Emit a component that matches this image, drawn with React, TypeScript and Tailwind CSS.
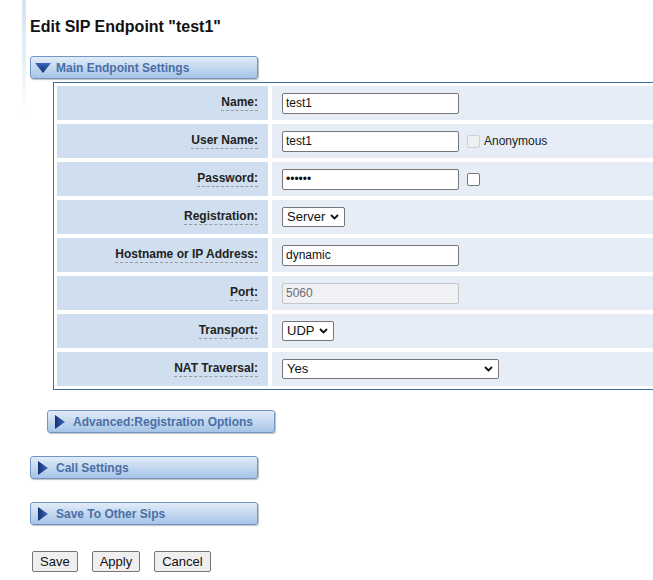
import React from "react";

const font = "font-['Liberation_Sans',Arial,sans-serif]";

function DownArrow() {
  return (
    <svg width="16" height="10" viewBox="0 0 16 10" className="shrink-0">
      <defs>
        <linearGradient id="dg" x1="0" y1="0" x2="0" y2="1">
          <stop offset="0" stopColor="#3a64c0" />
          <stop offset="1" stopColor="#14306f" />
        </linearGradient>
      </defs>
      <polygon points="0,0 16,0 8,10" fill="url(#dg)" />
    </svg>
  );
}

function RightArrow() {
  return (
    <svg width="10" height="14" viewBox="0 0 10 14" className="shrink-0">
      <defs>
        <linearGradient id="rg" x1="0" y1="0" x2="1" y2="0">
          <stop offset="0" stopColor="#14306f" />
          <stop offset="1" stopColor="#3f6ac4" />
        </linearGradient>
      </defs>
      <polygon points="0,0 10,7 0,14" fill="url(#rg)" />
    </svg>
  );
}

function SectionBar({
  title,
  open,
  className = "",
}: {
  title: string;
  open?: boolean;
  className?: string;
}) {
  return (
    <div
      className={`flex h-[23px] w-[228px] items-center rounded-[3px] border border-[#7196c4] bg-gradient-to-b from-[#e2ecf8] to-[#a6c4e8] shadow-[1px_1px_1px_rgba(0,0,0,0.25)] ${
        open ? "pl-[4px]" : "pl-[7px]"
      } ${className}`}
    >
      {open ? <DownArrow /> : <RightArrow />}
      <span
        className={`text-[12px] font-bold text-[#4a6fa5] ${
          open ? "ml-[5px]" : "ml-[8px]"
        }`}
      >
        {title}
      </span>
    </div>
  );
}

function Chevron() {
  return (
    <svg width="9" height="6" viewBox="0 0 9 6" className="shrink-0">
      <polyline
        points="1,1 4.5,4.5 8,1"
        fill="none"
        stroke="#111"
        strokeWidth="1.8"
      />
    </svg>
  );
}

function TextBox({ value, disabled, password }: { value: string; disabled?: boolean; password?: boolean }) {
  return (
    <input
      readOnly
      type={password ? "password" : "text"}
      value={value}
      className={`h-[21px] w-[177px] rounded-[2px] border px-[3px] text-[12px] outline-none ${font} ${
        disabled
          ? "border-[#c4c4c4] bg-[#f0f1f4] text-[#6d6d6d]"
          : "border-[#767676] bg-white text-[#111]"
      }`}
    />
  );
}

function Select({ value, width }: { value: string; width: string }) {
  return (
    <div
      className={`flex h-[20px] items-center justify-between rounded-[2px] border border-[#767676] bg-white pl-[4px] pr-[5px] text-[13px] text-[#111] ${width}`}
    >
      <span>{value}</span>
      <Chevron />
    </div>
  );
}

const rows: { label: string; field: React.ReactNode }[] = [
  { label: "Name:", field: <TextBox value="test1" /> },
  {
    label: "User Name:",
    field: (
      <div className="flex items-center">
        <TextBox value="test1" />
        <span className="ml-[8px] h-[13px] w-[13px] rounded-[2px] border border-[#cfcfcf] bg-[#eef0f3]" />
        <span className="ml-[4px] text-[12px] text-[#222]">Anonymous</span>
      </div>
    ),
  },
  {
    label: "Password:",
    field: (
      <div className="flex items-center">
        <TextBox value="123456" password />
        <span className="ml-[8px] h-[13px] w-[13px] rounded-[2px] border border-[#767676] bg-white" />
      </div>
    ),
  },
  { label: "Registration:", field: <Select value="Server" width="w-[63px]" /> },
  { label: "Hostname or IP Address:", field: <TextBox value="dynamic" /> },
  { label: "Port:", field: <TextBox value="5060" disabled /> },
  { label: "Transport:", field: <Select value="UDP" width="w-[52px]" /> },
  { label: "NAT Traversal:", field: <Select value="Yes" width="w-[217px]" /> },
];

export default function App() {
  return (
    <div className={`flex h-[580px] w-[653px] items-start overflow-hidden bg-white ${font}`}>
      <div className="ml-[22px] h-[115px] w-[4px] shrink-0 bg-gradient-to-b from-[#d4e3f1] via-[#e6eff8] to-white" />

      <div className="ml-[4px] flex min-w-0 flex-1 flex-col items-start">
        <h1 className="mt-[17px] text-[16px] font-bold leading-[19px] text-[#111]">
          Edit SIP Endpoint "test1"
        </h1>

        <SectionBar title="Main Endpoint Settings" open className="mt-[20px]" />

        <div className="ml-[23px] mt-[3px] w-[620px] shrink-0 border border-[#3d6ea6] bg-white p-[3px]">
          <div className="flex flex-col gap-[4px]">
            {rows.map((r) => (
              <div key={r.label} className="flex h-[34px] gap-[4px]">
                <div className="flex w-[211px] shrink-0 items-center justify-end bg-[#d0dff0] pr-[10px]">
                  <span className="border-b border-dashed border-[#9a9a9a] pb-[1px] text-[12px] font-bold leading-[14px] text-[#222]">
                    {r.label}
                  </span>
                </div>
                <div className="flex flex-1 items-center bg-[#e6edf6] pl-[10px]">{r.field}</div>
              </div>
            ))}
          </div>
        </div>

        <SectionBar title="Advanced:Registration Options" className="ml-[17px] mt-[20px]" />
        <SectionBar title="Call Settings" className="mt-[23px]" />
        <SectionBar title="Save To Other Sips" className="mt-[23px]" />

        <div className="ml-[2px] mt-[26px] flex gap-[14px]">
          {["Save", "Apply", "Cancel"].map((b) => (
            <button
              key={b}
              className="h-[21px] rounded-[2px] border border-[#767676] bg-[#efefef] px-[7px] text-[13px] leading-[19px] text-[#111]"
            >
              {b}
            </button>
          ))}
        </div>
      </div>
    </div>
  );
}
